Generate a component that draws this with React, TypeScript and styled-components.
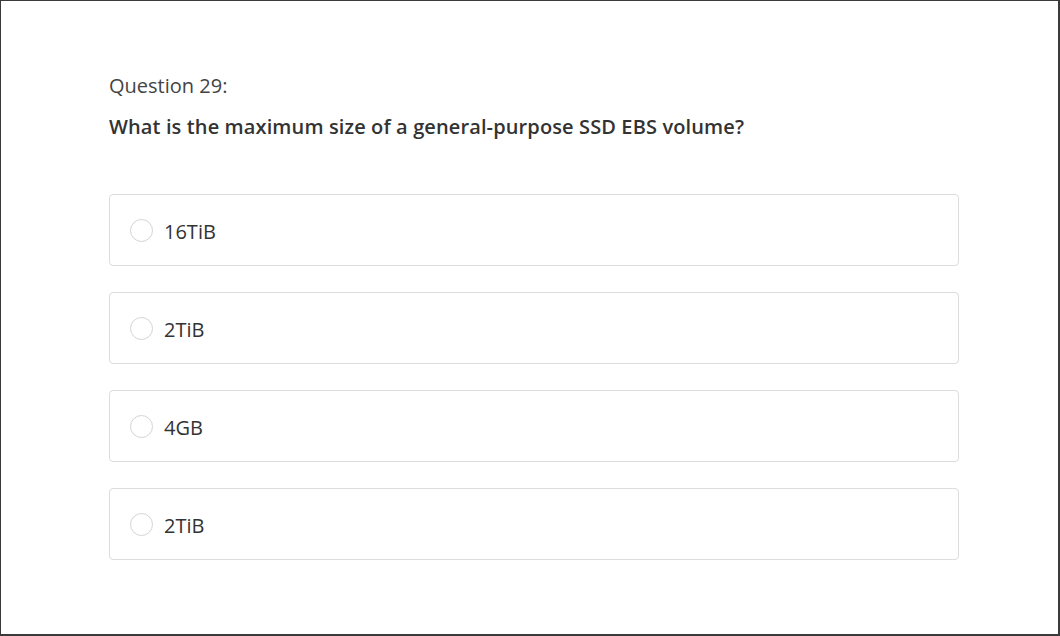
import React from "react";
import styled, { createGlobalStyle } from "styled-components";

const Global = createGlobalStyle`
  html, body { margin: 0; padding: 0; background: #fff; }
  body { font-family: "Open Sans", "Noto Sans", sans-serif; color: #333; }
`;

const Frame = styled.div`
  box-sizing: border-box;
  width: 1060px;
  height: 636px;
  border: 1px solid #3a3a3a;
  border-right-width: 2px;
  border-bottom-width: 2px;
  padding: 72px 0 0 108px;
`;

const Content = styled.div`
  width: 850px;
  display: flex;
  flex-direction: column;
`;

const Label = styled.div`
  font-size: 20px;
  line-height: 26px;
  color: #444;
`;

const Prompt = styled.div`
  margin-top: 15px;
  font-size: 20px;
  line-height: 26px;
  font-weight: 600;
  letter-spacing: 0.12px;
  color: #333;
`;

const Options = styled.div`
  margin-top: 54px;
  display: flex;
  flex-direction: column;
  gap: 26px;
`;

const Option = styled.label`
  box-sizing: border-box;
  height: 72px;
  border: 1px solid #dcdcdc;
  border-radius: 4px;
  display: flex;
  align-items: center;
  padding-left: 20px;
  gap: 11px;
  cursor: pointer;
`;

const Radio = styled.span`
  box-sizing: border-box;
  width: 23px;
  height: 23px;
  border-radius: 50%;
  border: 1px solid #d4d4d4;
  background: #fff;
`;

const OptionText = styled.span`
  padding-top: 3px;
  font-size: 20px;
  line-height: 26px;
  color: #333;
`;

const answers = ["16TiB", "2TiB", "4GB", "2TiB"];

export default function App() {
  return (
    <>
      <Global />
      <Frame>
        <Content>
          <Label>Question 29:</Label>
          <Prompt>What is the maximum size of a general-purpose SSD EBS volume?</Prompt>
          <Options>
            {answers.map((a, i) => (
              <Option key={i}>
                <Radio />
                <OptionText>{a}</OptionText>
              </Option>
            ))}
          </Options>
        </Content>
      </Frame>
    </>
  );
}
